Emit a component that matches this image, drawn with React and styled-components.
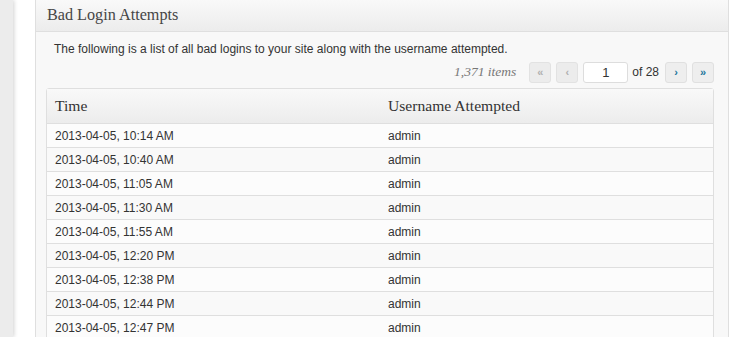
import React from "react";
import styled, { createGlobalStyle } from "styled-components";

const Global = createGlobalStyle`
  html, body { margin: 0; padding: 0; background: #fff; }
  body { font-family: "Liberation Sans", Arial, sans-serif; overflow: hidden; }
`;

const Page = styled.div`
  display: flex;
  height: 337px;
  width: 750px;
  overflow: hidden;
`;

const Sidebar = styled.div`
  width: 13px;
  flex: none;
  background: #ececec;
  box-shadow: 1px 0 4px rgba(0, 0, 0, 0.18);
`;

const Content = styled.div`
  flex: none;
  padding-left: 22px;
  width: 694px;
`;

const Postbox = styled.div`
  border: 1px solid #dfdfdf;
  border-top: none;
  background: #f8f8f8;
  border-radius: 0 0 3px 3px;
  height: 400px;
`;

const Header = styled.h3`
  margin: 0;
  height: 31px;
  line-height: 31px;
  padding-left: 11px;
  border-bottom: 1px solid #dfdfdf;
  background: linear-gradient(to bottom, #f9f9f9, #ececec);
  font-family: "Liberation Serif", Georgia, serif;
  font-weight: normal;
  font-size: 16.2px;
  color: #464646;
`;

const Inside = styled.div`
  padding: 9px 14px 0 10px;
`;

const Desc = styled.p`
  margin: 0 0 0 8px;
  font-size: 12px;
  line-height: 16px;
  color: #333;
`;

const Nav = styled.div`
  display: flex;
  justify-content: flex-end;
  align-items: center;
  gap: 5px;
  margin-top: 4px;
  height: 22px;
`;

const Count = styled.span`
  font-family: "Liberation Serif", Georgia, serif;
  font-style: italic;
  font-size: 13.5px;
  color: #777;
  margin-right: 8px;
`;

const PageBtn = styled.span`
  display: flex;
  align-items: center;
  justify-content: center;
  width: 20px;
  height: 19px;
  border: 1px solid ${(p) => (p.$disabled ? "#e2e2e2" : "#e0e0e0")};
  border-radius: 3px;
  background: ${(p) => (p.$disabled ? "#ececec" : "#eeeeee")};
  color: ${(p) => (p.$disabled ? "#b0b0b0" : "#21759b")};
  font-size: 11px;
  font-weight: bold;
`;

const PageInput = styled.span`
  display: flex;
  align-items: center;
  justify-content: center;
  width: 43px;
  height: 19px;
  border: 1px solid #dddddd;
  border-radius: 3px;
  background: #fff;
  font-size: 13px;
  color: #333;
`;

const Of = styled.span`
  font-size: 12px;
  color: #333;
  margin: 0 1px 0 -1px;
`;

const Table = styled.table`
  margin-top: 5px;
  width: 668px;
  border-collapse: separate;
  border-spacing: 0;
  border: 1px solid #dfdfdf;
  border-radius: 3px;
  table-layout: fixed;
`;

const Th = styled.th`
  text-align: left;
  font-family: "Liberation Serif", Georgia, serif;
  font-weight: normal;
  font-size: 15.6px;
  color: #333;
  height: 34px;
  padding: 0 8px;
  background: linear-gradient(to bottom, #f9f9f9, #ececec);
  border-bottom: 1px solid #dfdfdf;
`;

const Tr = styled.tr`
  background: ${(p) => (p.$alt ? "#f9f9f9" : "#fcfcfc")};
`;

const Td = styled.td`
  font-size: 12px;
  color: #333;
  height: 23px;
  padding: 0 8px;
  border-bottom: 1px solid #dfdfdf;
`;

const times = [
  "10:14 AM",
  "10:40 AM",
  "11:05 AM",
  "11:30 AM",
  "11:55 AM",
  "12:20 PM",
  "12:38 PM",
  "12:44 PM",
  "12:47 PM",
];

export default function App() {
  return (
    <Page>
      <Global />
      <Sidebar />
      <Content>
        <Postbox>
          <Header>Bad Login Attempts</Header>
          <Inside>
            <Desc>The following is a list of all bad logins to your site along with the username attempted.</Desc>
            <Nav>
              <Count>1,371 items</Count>
              <PageBtn $disabled>«</PageBtn>
              <PageBtn $disabled>‹</PageBtn>
              <PageInput>1</PageInput>
              <Of>of 28</Of>
              <PageBtn>›</PageBtn>
              <PageBtn>»</PageBtn>
            </Nav>
            <Table>
              <thead>
                <tr>
                  <Th>Time</Th>
                  <Th>Username Attempted</Th>
                </tr>
              </thead>
              <tbody>
                {times.map((t, i) => (
                  <Tr key={t} $alt={i % 2 === 1}>
                    <Td>2013-04-05, {t}</Td>
                    <Td>admin</Td>
                  </Tr>
                ))}
              </tbody>
            </Table>
          </Inside>
        </Postbox>
      </Content>
    </Page>
  );
}
